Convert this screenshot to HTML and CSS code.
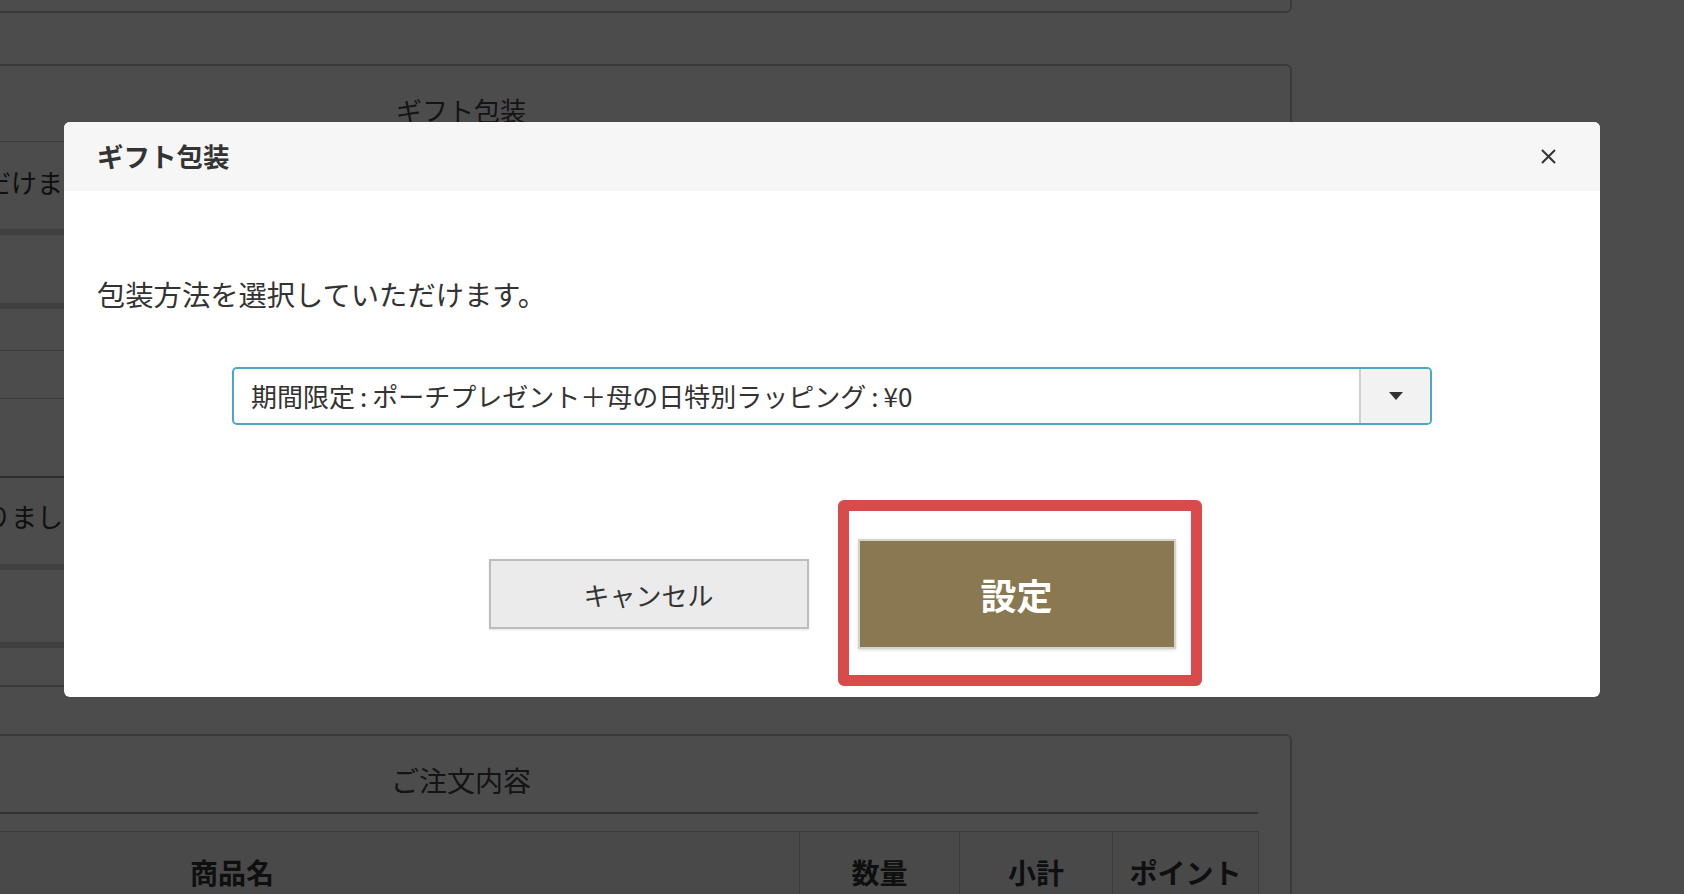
FILE: index.html
```html
<!DOCTYPE html>
<html lang="ja">
<head>
<meta charset="utf-8">
<title>ギフト包装</title>
<link rel="stylesheet" href="styles.css">
</head>
<body>
<div class="page">
  <div class="panel panel-top"></div>
  <section class="panel panel-gift">
    <h2 class="panel-title">ギフト包装</h2>
    <div class="form-table">
      <div class="row row-a"><span class="row-text">ご利用いただけます。</span></div>
      <div class="band"></div>
      <div class="row row-b"></div>
      <div class="band"></div>
      <div class="row row-c"></div>
      <div class="row row-d"></div>
      <div class="row row-e"></div>
      <div class="row row-f"><span class="row-text">ご注文を承りました。</span></div>
      <div class="band"></div>
      <div class="row row-g"></div>
      <div class="band"></div>
      <div class="row row-h"></div>
    </div>
  </section>
  <section class="panel panel-order">
    <h2 class="panel-title order-title">ご注文内容</h2>
    <table class="order-table">
      <thead>
        <tr>
          <th class="c-name">商品名</th>
          <th class="c-qty">数量</th>
          <th class="c-sub">小計</th>
          <th class="c-pt">ポイント</th>
        </tr>
      </thead>
    </table>
  </section>
</div>

<div class="overlay"></div>

<div class="modal" role="dialog">
  <div class="modal-header">
    <h3 class="modal-title">ギフト包装</h3>
    <button class="modal-close" type="button" aria-label="閉じる">
      <svg width="15" height="15" viewBox="0 0 15 15"><path d="M1 1L14 14M14 1L1 14" stroke="#333" stroke-width="2" fill="none"/></svg>
    </button>
  </div>
  <div class="modal-body">
    <p class="modal-text">包装方法を選択していただけます。</p>
    <div class="select">
      <span class="select-value">期間限定<span class="colon">:</span>ポーチプレゼント＋母の日特別ラッピング<span class="colon">:</span>¥0</span>
      <span class="select-arrow"><svg width="14" height="8" viewBox="0 0 14 8"><path d="M0 0H14L7 8Z" fill="#333"/></svg></span>
    </div>
    <div class="actions">
      <button class="btn btn-cancel" type="button">キャンセル</button>
      <div class="btn-wrap">
        <button class="btn btn-set" type="button">設定</button>
        <span class="highlight"></span>
      </div>
    </div>
  </div>
</div>
</body>
</html>
```

FILE: styles.css
```css
html, body {
  margin: 0;
  padding: 0;
}
body {
  width: 1684px;
  height: 894px;
  overflow: hidden;
  background: #fff;
  font-family: "Noto Sans CJK JP", "Noto Sans", sans-serif;
  color: #333;
}

/* ---------- underlying page ---------- */
.page {
  margin-left: -370px;
  width: 1662px;
}
.panel {
  box-sizing: border-box;
  border: 2px solid #c4c4c4;
  border-radius: 6px;
  background: #fff;
}
.panel-top {
  height: 13px;
  border-top: none;
  border-radius: 0 0 6px 6px;
}
.panel-gift {
  margin-top: 51px;
  padding: 0 32px;
}
.panel-title {
  margin: 0;
  padding-top: 24px;
  font-size: 26px;
  font-weight: 400;
  line-height: 39px;
  text-align: center;
  color: #444;
}
.form-table {
  margin-top: 12px;
  border-top: 1px solid #c8c8c8;
}
.row {
  padding-left: 191px;
}
.row-text {
  display: block;
  font-size: 26px;
  line-height: 39px;
  color: #333;
  white-space: nowrap;
}
.row-a { height: 87px; }
.row-a .row-text { padding-top: 20px; }
.band { height: 6px; background: #d6d6d6; }
.row-b { height: 68px; }
.row-c { height: 41px; border-bottom: 1px solid #c8c8c8; }
.row-d { height: 47px; border-bottom: 1px solid #c8c8c8; }
.row-e { height: 77px; border-bottom: 2px solid #9a9a9a; }
.row-f { height: 86px; }
.row-f .row-text { padding-top: 18px; }
.row-g { height: 72px; }
.row-h { height: 37px; }

.panel-order {
  margin-top: 47px;
  padding: 0 32px;
  height: 300px;
  border-bottom: none;
}
.order-title {
  padding-top: 25px;
  padding-bottom: 12px;
  font-size: 28px;
  border-bottom: 2px solid #a8a8a8;
}
.order-table {
  margin-top: 17px;
  width: 1590px;
  border-collapse: collapse;
  table-layout: fixed;
}
.order-table th {
  height: 80px;
  padding: 0 0 12px;
  border: 1px solid #c8c8c8;
  background: #f5f5f5;
  font-size: 28px;
  font-weight: 700;
  color: #333;
  text-align: center;
}
.c-name { width: 1134px; }
.c-qty { width: 159px; }
.c-sub { width: 152px; }
.c-pt { width: 145px; }

/* ---------- overlay ---------- */
.overlay {
  position: fixed;
  inset: 0;
  background: rgba(0, 0, 0, 0.7);
}

/* ---------- modal ---------- */
.modal {
  position: fixed;
  left: 64px;
  top: 122px;
  width: 1536px;
  background: #fff;
  border-radius: 6px;
}
.modal-header {
  box-sizing: border-box;
  height: 69px;
  padding: 0 44px 0 33px;
  background: #f6f6f6;
  border-radius: 6px 6px 0 0;
  display: flex;
  align-items: center;
  justify-content: space-between;
}
.modal-title {
  margin: 0;
  font-size: 26.5px;
  font-weight: 700;
  line-height: 1;
  color: #333;
}
.modal-close {
  width: 15px;
  height: 15px;
  padding: 0;
  border: none;
  background: none;
  display: flex;
}
.modal-body {
  padding: 0 33px 48px;
}
.modal-text {
  margin: 82px 0 0;
  font-size: 28.3px;
  line-height: 42px;
  color: #333;
}
.select {
  box-sizing: border-box;
  width: 1200px;
  height: 58px;
  margin: 52px auto 0;
  border: 2px solid #4aa8c6;
  border-radius: 5px;
  display: flex;
  overflow: hidden;
}
.select-value {
  flex: 1;
  padding-left: 17px;
  font-size: 26px;
  line-height: 54px;
  color: #333;
  white-space: nowrap;
}
.colon {
  margin: 0 5px;
}
.select-arrow {
  width: 69px;
  border-left: 2px solid #cfcfcf;
  background: #f2f2f2;
  display: flex;
  align-items: center;
  justify-content: center;
}
.actions {
  margin-top: 114px;
  height: 110px;
  display: flex;
  align-items: center;
  justify-content: center;
  gap: 49px;
}
.btn {
  box-sizing: border-box;
  font-family: inherit;
  margin: 0;
  cursor: pointer;
}
.btn-cancel {
  width: 320px;
  height: 70px;
  background: #ebebeb;
  border: 2px solid #bdbdbd;
  box-shadow: 0 1px 2px rgba(0, 0, 0, 0.1);
  font-size: 26px;
  color: #333;
}
.btn-wrap {
  position: relative;
  display: flex;
}
.btn-set {
  width: 318px;
  height: 110px;
  background: #8a7850;
  border: 2px solid #d4d2ca;
  box-shadow: 0 1px 3px rgba(0, 0, 0, 0.15);
  font-size: 36px;
  font-weight: 700;
  color: #fff;
}
.highlight {
  position: absolute;
  left: -20px;
  top: -39px;
  width: 364px;
  height: 186px;
  box-sizing: border-box;
  border: 11px solid #d94a4a;
  border-radius: 6px;
  pointer-events: none;
}
```
